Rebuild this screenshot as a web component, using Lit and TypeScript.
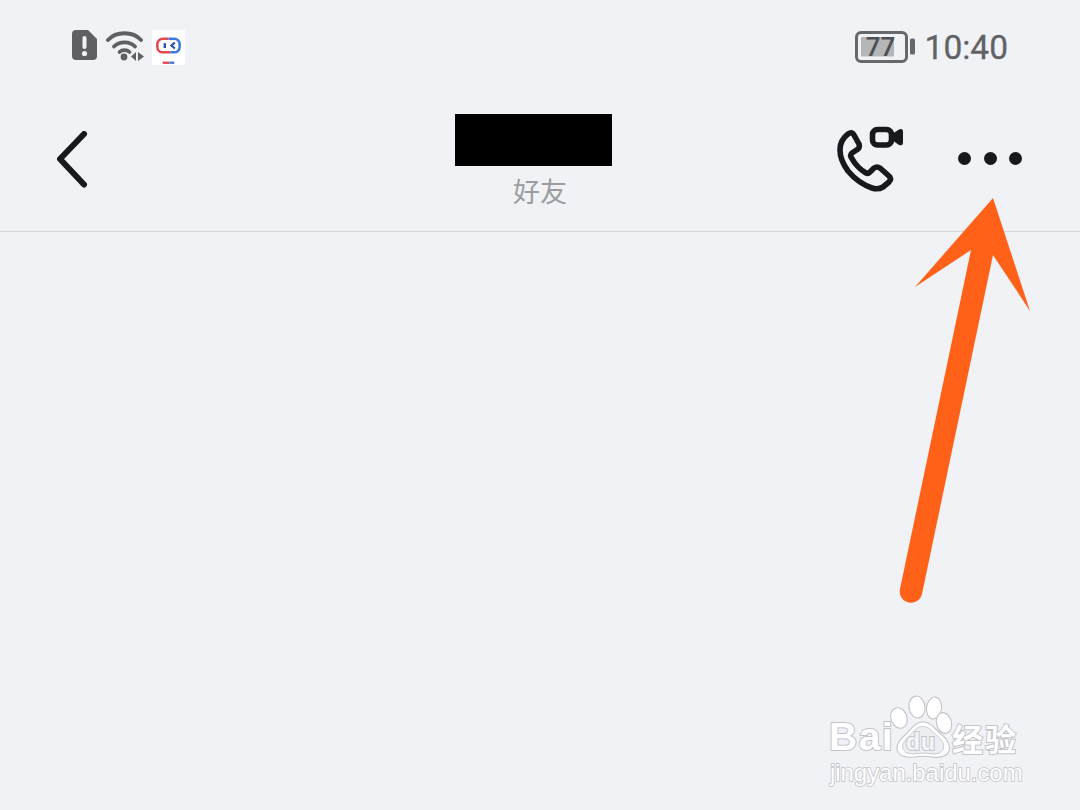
import { LitElement, html, css, svg } from "lit";
import { customElement } from "lit/decorators.js";

@customElement("app-root")
export class AppRoot extends LitElement {
  static styles = css`
    :host {
      display: block;
      position: relative;
      width: 1080px;
      height: 810px;
      overflow: hidden;
      background: #f0f2f6;
      font-family: "Roboto", "Noto Sans CJK SC", sans-serif;
    }

    .status {
      height: 92px;
      box-sizing: border-box;
      padding: 29px 72px 0 71px;
      display: flex;
      justify-content: space-between;
      align-items: flex-start;
    }

    .status-left {
      display: flex;
      align-items: flex-start;
      gap: 7px;
    }

    .status-right {
      display: flex;
      align-items: center;
      gap: 10px;
      height: 36px;
    }

    .app-icon {
      background: #fff;
      width: 33px;
      height: 35px;
      display: block;
      margin-top: 1px;
    }

    .battery {
      position: relative;
      width: 60px;
      height: 32px;
      display: block;
    }

    .battery-num {
      position: absolute;
      left: 10px;
      top: 0;
      width: 32px;
      line-height: 32px;
      text-align: center;
      font-size: 26px;
      font-weight: 500;
      color: #4f5053;
    }

    .time {
      font-size: 33.5px;
      line-height: 36px;
      margin-top: 2px;
      -webkit-text-stroke: 0.3px #616266;
      color: #616266;
    }

    .header {
      height: 140px;
      box-sizing: border-box;
      border-bottom: 1px solid #d6d7db;
      padding: 22px 58px 0 58px;
      display: grid;
      grid-template-columns: 1fr auto 1fr;
    }

    .back {
      display: block;
      margin: 17px 0 0 -4px;
    }

    .title {
      display: flex;
      flex-direction: column;
      align-items: center;
    }

    .mask {
      width: 157px;
      height: 52px;
      margin-right: 14px;
      background: #000;
    }

    .sub {
      margin-top: 11px;
      font-size: 27px;
      line-height: 32px;
      color: #9b9ca0;
    }

    .actions {
      display: flex;
      justify-content: flex-end;
      align-items: flex-start;
      gap: 54px;
      padding-top: 12px;
    }

    .dots {
      display: flex;
      gap: 12.5px;
      margin-top: 26px;
    }

    .dots span {
      width: 13px;
      height: 13px;
      border-radius: 50%;
      background: #17191d;
    }

    .arrow {
      position: absolute;
      left: 0;
      top: 0;
      pointer-events: none;
    }

    .mark {
      position: absolute;
      left: 828px;
      top: 695px;
      width: 196px;
      height: 92px;
    }

    .mark-text {
      position: absolute;
      color: #fff;
      -webkit-text-stroke: 2px #c2c4c8;
      paint-order: stroke fill;
      white-space: nowrap;
    }

    .bai {
      left: 1px;
      top: 18px;
      font: 700 39px/48px "Liberation Sans", sans-serif;
      letter-spacing: 1.5px;
    }

    .du {
      left: 78px;
      top: 34px;
      font: 700 23px/26px "Liberation Sans", sans-serif;
      letter-spacing: 1px;
      color: #f4f5f8;
    }

    .cn {
      left: 124px;
      top: 24px;
      font: 700 31px/38px "Noto Sans CJK SC", sans-serif;
      letter-spacing: 2px;
    }

    .url {
      left: 2px;
      top: 64px;
      font: 400 24px/28px "Liberation Sans", sans-serif;
      letter-spacing: -0.05px;
      -webkit-text-stroke-width: 1.6px;
    }

    .paw {
      position: absolute;
      left: 62px;
      top: 0;
    }
  `;

  renderPaw() {
    const palm =
      "M33 27C41 27 45 34 51 39C57 44 61 49 59 56C57 62 48 63 42 62C36 61 30 61 24 62C16 63 8 61 7 54C6 48 12 43 17 38C22 33 25 27 33 27z";
    return svg`
      <g fill="#fff" stroke="#c2c4c8" stroke-width="1.1">
        <ellipse cx="9" cy="23" rx="8" ry="10.500" transform="rotate(-18 9 23)" />
        <ellipse cx="27" cy="12" rx="8" ry="11" transform="rotate(-8 27 12)" />
        <ellipse cx="44" cy="13" rx="7.500" ry="11" transform="rotate(8 44 13)" />
        <ellipse cx="54" cy="28" rx="7.500" ry="10.500" transform="rotate(-14 54 28)" />
        <path d=${palm} />
        <path d=${palm} fill="#eceef2" transform="translate(33 47) scale(.78) translate(-33 -47)" />
      </g>`;
  }

  render() {
    return html`
      <div class="status">
        <div class="status-left">
          <svg width="27" height="32" viewBox="0 0 27 32">
            <path fill="#5f6063" d="M5 1h12l9 9v17a4 4 0 0 1-4 4H5a4 4 0 0 1-4-4V5a4 4 0 0 1 4-4z" />
            <rect x="11.500" y="7" width="4" height="13" rx="2" fill="#f0f2f6" />
            <circle cx="13.500" cy="24.500" r="2.600" fill="#f0f2f6" />
          </svg>
          <svg width="39" height="33" viewBox="0 0 39 33" style="margin-left:1px">
            <g fill="none" stroke="#5f6063" stroke-width="3.800" stroke-linecap="round">
              <path d="M2 11C10 2 27 2 35 11" />
              <path d="M8 17.500C13 12 24 12 29 17.500" />
              <path d="M13.500 23C16 20.500 21 20.500 23.500 23" />
            </g>
            <circle cx="18" cy="28" r="3.400" fill="#5f6063" />
            <path fill="#5f6063" d="M30 23v9l-5-4.500zM32 23l6 4.500-6 4.500z" />
          </svg>
          <svg class="app-icon" viewBox="0 0 34 35">
            <path fill="none" stroke="#e5484d" stroke-width="2.600" d="M17 8.500H11a5.500 5.500 0 0 0-5.500 5.500v3a5.500 5.500 0 0 0 5.500 5.500h8" />
            <path fill="none" stroke="#3c78e0" stroke-width="2.600" d="M17 8.500h6a5.500 5.500 0 0 1 5.500 5.500v3a5.500 5.500 0 0 1-5.500 5.500h-4" />
            <rect x="12" y="13" width="2.400" height="5" fill="#2b4fb0" />
            <path fill="none" stroke="#2b4fb0" stroke-width="2.200" d="M23.500 12.500l-3.500 3 3.500 3" />
            <rect x="11" y="32" width="7" height="2.400" fill="#e5484d" />
            <rect x="18" y="32" width="5" height="2.400" fill="#3c78e0" />
          </svg>
        </div>
        <div class="status-right">
          <div class="battery">
            <svg width="60" height="32" viewBox="0 0 60 32">
              <rect x="1.500" y="1.500" width="50" height="29" rx="4.500" fill="none" stroke="#67686b" stroke-width="3" />
              <rect x="6" y="6" width="33" height="19.500" rx="1" fill="#b5b6b9" />
              <rect x="55" y="7.500" width="5" height="16" rx="1.500" fill="#67686b" />
            </svg>
            <span class="battery-num">77</span>
          </div>
          <span class="time">10:40</span>
        </div>
      </div>

      <div class="header">
        <svg class="back" width="36" height="60" viewBox="0 0 36 60">
          <path d="M30 3L6 28l24 25.500" fill="none" stroke="#17191d" stroke-width="6" stroke-linecap="round" stroke-linejoin="round" />
        </svg>
        <div class="title">
          <div class="mask"></div>
          <div class="sub">好友</div>
        </div>
        <div class="actions">
          <svg width="68" height="66" viewBox="0 0 68 66">
            <path fill="none" stroke="#17191d" stroke-width="5.600" stroke-linejoin="round"
              d="M12 8Q16 5 18 9L23 18Q24 21 22 23L16 27Q14 29 15 31Q21 42 30 47Q32 48 34 46L38 42Q41 40 44 42L53 50Q56 53 53 56L47 61Q42 64 36 62Q22 57 12 45Q4 34 4 24Q4 14 12 8Z" />
            <rect x="36.500" y="3.500" width="19" height="15.500" rx="5" fill="none" stroke="#17191d" stroke-width="5.600" />
            <path fill="#17191d" d="M56 8L63 3.500Q67 2 67 6V17Q67 20 63 19L56 14z" />
          </svg>
          <div class="dots"><span></span><span></span><span></span></div>
        </div>
      </div>

      <div class="mark">
        <svg class="paw" width="80" height="80" viewBox="0 0 80 80">${this.renderPaw()}</svg>
        <span class="mark-text bai">Bai</span>
        <span class="mark-text du">du</span>
        <span class="mark-text cn">经验</span>
        <span class="mark-text url">jingyan.baidu.com</span>
      </div>

      <svg class="arrow" width="1080" height="810" viewBox="0 0 1080 810">
        <path fill="#ff6119" d="M993 198L1030 311 993 255 922 594a11 11 0 0 1-22-5L971 250 915 287z" />
      </svg>
    `;
  }
}
